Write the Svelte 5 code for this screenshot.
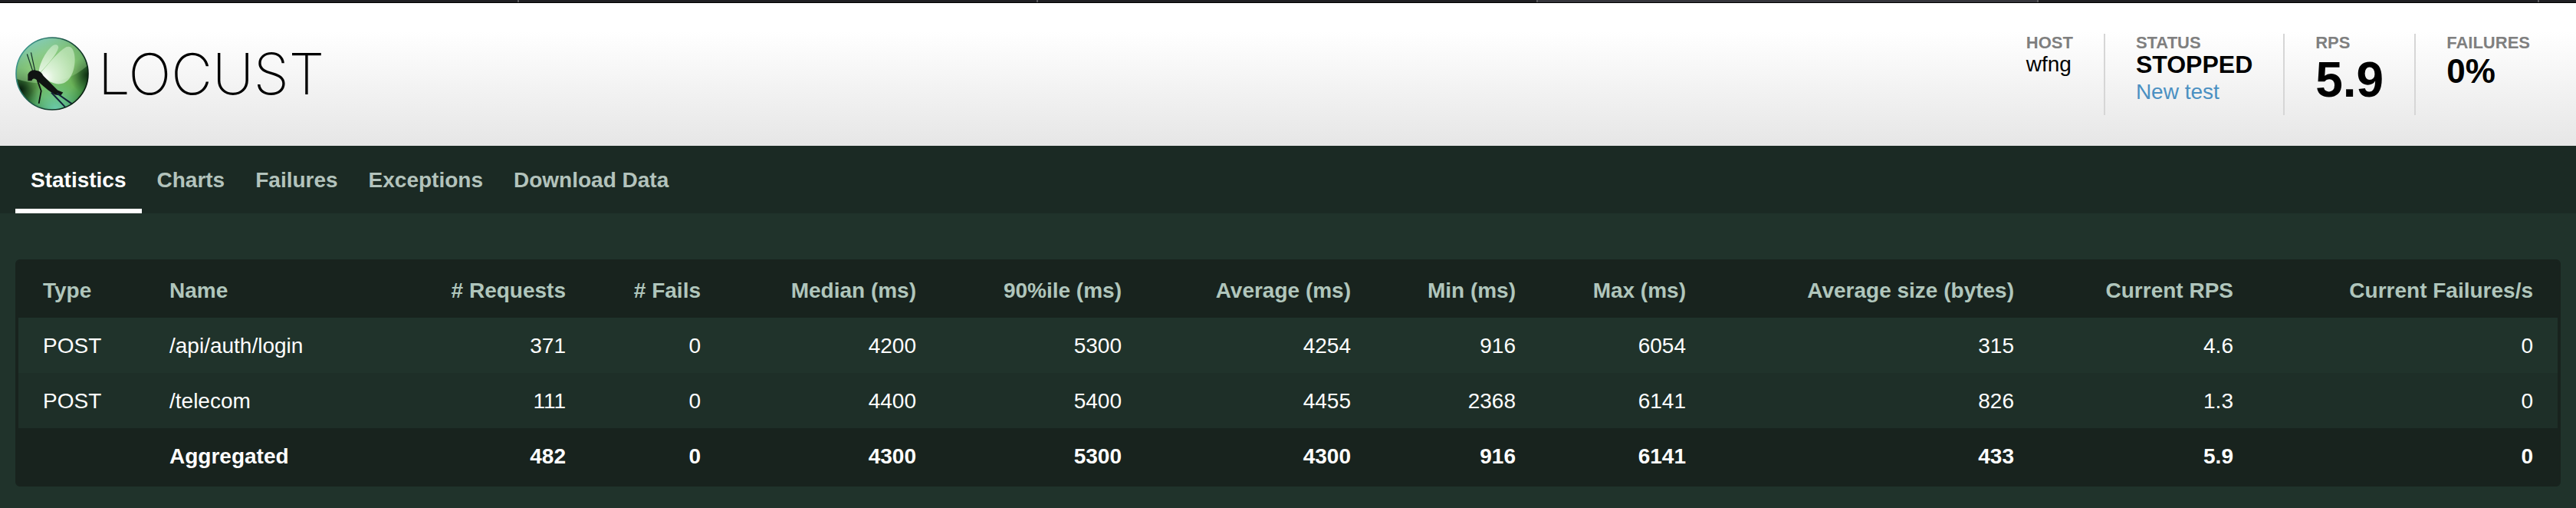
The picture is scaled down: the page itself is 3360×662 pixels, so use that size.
<script>
  const tabs = ['Statistics', 'Charts', 'Failures', 'Exceptions', 'Download Data'];
  let active = $state('Statistics');

  const columns = [
    { label: 'Type', width: 165, text: true },
    { label: 'Name', width: 321, text: true },
    { label: '# Requests', width: 260 },
    { label: '# Fails', width: 176 },
    { label: 'Median (ms)', width: 281 },
    { label: '90%ile (ms)', width: 268 },
    { label: 'Average (ms)', width: 299 },
    { label: 'Min (ms)', width: 215 },
    { label: 'Max (ms)', width: 222 },
    { label: 'Average size (bytes)', width: 428 },
    { label: 'Current RPS', width: 286 },
    { label: 'Current Failures/s', width: 391 }
  ];
  const total = columns.reduce((sum, c) => sum + c.width, 0);

  const rows = [
    ['POST', '/api/auth/login', 371, 0, 4200, 5300, 4254, 916, 6054, 315, '4.6', 0],
    ['POST', '/telecom', 111, 0, 4400, 5400, 4455, 2368, 6141, 826, '1.3', 0]
  ];
  const aggregated = ['', 'Aggregated', 482, 0, 4300, 5300, 4300, 916, 6141, 433, '5.9', 0];
</script>

<div class="page">
  <div class="strip"><i class="wide"></i><i class="wide"></i><i></i><i class="lit"></i><i></i><i class="end"></i></div>

  <header>
    <div class="brand">
      <svg viewBox="0 0 94 94" aria-hidden="true">
        <defs>
          <radialGradient id="ball" cx="0.5" cy="0.5" r="0.52">
            <stop offset="0" stop-color="#7cc46a" />
            <stop offset="0.65" stop-color="#68b056" />
            <stop offset="0.9" stop-color="#469346" />
            <stop offset="1" stop-color="#2a6a34" />
          </radialGradient>
          <linearGradient id="gloss" x1="0" y1="0" x2="0.7" y2="1">
            <stop offset="0" stop-color="#8fdcf0" stop-opacity="0.95" />
            <stop offset="0.5" stop-color="#9bd696" stop-opacity="0.6" />
            <stop offset="1" stop-color="#a5dc90" stop-opacity="0.3" />
          </linearGradient>
          <radialGradient id="shadeLeft" cx="0.06" cy="0.72" r="0.3">
            <stop offset="0" stop-color="#04150a" stop-opacity="0.95" />
            <stop offset="1" stop-color="#0c3010" stop-opacity="0" />
          </radialGradient>
          <radialGradient id="shadeRight" cx="1" cy="0.52" r="0.26">
            <stop offset="0" stop-color="#062009" stop-opacity="0.9" />
            <stop offset="1" stop-color="#0c3010" stop-opacity="0" />
          </radialGradient>
          <radialGradient id="glow" cx="0.55" cy="1" r="0.42">
            <stop offset="0" stop-color="#6fd0b4" stop-opacity="0.95" />
            <stop offset="1" stop-color="#6fd0a0" stop-opacity="0" />
          </radialGradient>
          <radialGradient id="wing" gradientUnits="userSpaceOnUse" cx="37" cy="52" r="42">
            <stop offset="0" stop-color="#fff" />
            <stop offset="0.3" stop-color="#f2fcf0" stop-opacity="0.8" />
            <stop offset="1" stop-color="#e0f7dc" stop-opacity="0.5" />
          </radialGradient>
          <linearGradient id="rim" x1="0" y1="0" x2="1" y2="0.5">
            <stop offset="0" stop-color="#4cb0a8" />
            <stop offset="0.5" stop-color="#1d5a4c" />
            <stop offset="1" stop-color="#082010" />
          </linearGradient>
          <clipPath id="round"><circle cx="47" cy="47" r="46" /></clipPath>
        </defs>
        <circle cx="47" cy="47" r="46" fill="url(#ball)" />
        <g clip-path="url(#round)">
          <circle cx="47" cy="47" r="46" fill="url(#shadeLeft)" />
          <circle cx="47" cy="47" r="46" fill="url(#shadeRight)" />
          <circle cx="47" cy="47" r="46" fill="url(#glow)" />
          <path d="M0 53C28 64 66 61 94 35V0H0Z" fill="url(#gloss)" />
          <path d="M30 44C31 33 40 17 48 11C52 9 55 10 55 14C53 22 42 35 32 45Z" fill="url(#wing)" />
          <path d="M32 46C43 34 54 19 65 13C72 10 76 18 76 29C76 45 69 59 58 60C49 61 41 56 34 49Z" fill="url(#wing)" />
          <path d="M22 43L15 22M25 43L20 20" stroke="#17332a" stroke-width="1.2" fill="none" />
          <path d="M16 48C18 43 23 41 27 43C31 43 34 46 36 50L54 68L61 71L58 75L51 74C42 69 34 61 29 57C26 53 22 52 21 56H16Z" fill="#101412" />
          <path d="M28 55L33 69L30 85" stroke="#101412" stroke-width="1.8" fill="none" />
          <path d="M46 71L64 90M53 72L73 86" stroke="#13223a" stroke-width="2" fill="none" />
        </g>
        <circle cx="47" cy="47" r="46" fill="none" stroke="url(#rim)" stroke-width="1.6" />
      </svg>
      <span class="word">LOCUST</span>
    </div>

    <div class="boxes">
      <div class="box"><span class="label">HOST</span><span class="host">wfng</span></div>
      <div class="box">
        <span class="label">STATUS</span><strong class="status">STOPPED</strong>
        <a href="#new">New test</a>
      </div>
      <div class="box"><span class="label">RPS</span><strong class="rps">5.9</strong></div>
      <div class="box"><span class="label">FAILURES</span><strong class="fail">0%</strong></div>
    </div>
  </header>

  <nav>
    {#each tabs as tab}
      <button class:active={active === tab} onclick={() => (active = tab)}>{tab}</button>
    {/each}
  </nav>

  <main>
    <table>
      <colgroup>
        {#each columns as c}<col style="width: {(c.width / total) * 100}%" />{/each}
      </colgroup>
      <thead>
        <tr>{#each columns as c}<th scope="col" class:text={c.text}>{c.label}</th>{/each}</tr>
      </thead>
      <tbody>
        {#each rows as row}
          <tr>{#each row as cell, i}<td class:text={columns[i].text}>{cell}</td>{/each}</tr>
        {/each}
      </tbody>
      <tfoot>
        <tr>{#each aggregated as cell, i}<td class:text={columns[i].text}>{cell}</td>{/each}</tr>
      </tfoot>
    </table>
  </main>
</div>

<style>
  :global(body) {
    margin: 0;
    background: #20332b;
  }
  .page {
    font-family: 'Liberation Sans', Arial, sans-serif;
    font-size: 28px;
    line-height: 32px;
    color: #fff;
  }
  .strip {
    display: flex;
    height: 3px;
    background: #1f1f23;
    border-bottom: 1px solid #000;
  }
  .strip i {
    flex: 27;
    border-right: 2px solid #5a5a5e;
  }
  .strip .wide {
    flex: 28;
  }
  .strip .lit {
    background: #36363b;
  }
  .strip .end {
    flex: none;
    width: 48px;
    border-right: 0;
  }
  header {
    display: flex;
    justify-content: space-between;
    align-items: flex-start;
    padding: 40px 60px 40px 20px;
    background: linear-gradient(#fff 20%, #e6e6e6);
    color: #000;
  }
  .brand {
    display: flex;
    align-items: center;
    gap: 12px;
    padding-top: 4px;
  }
  .brand svg {
    width: 96px;
    height: 96px;
  }
  .word {
    font-family: Inter, sans-serif;
    font-weight: 250;
    font-size: 74px;
    line-height: 96px;
  }
  .boxes {
    display: flex;
  }
  .box {
    display: flex;
    flex-direction: column;
    min-height: 106px;
    padding-left: 40px;
  }
  .box:not(:last-child) {
    padding-right: 40px;
    border-right: 2px solid #d6d6d6;
  }
  .label {
    font-size: 22px;
    font-weight: bold;
    line-height: 24px;
    color: #7f7f7f;
  }
  .host {
    line-height: 32px;
  }
  .status {
    font-size: 32px;
    line-height: 32px;
  }
  .rps {
    font-size: 64px;
    line-height: 72px;
  }
  .fail {
    font-size: 44px;
    line-height: 50px;
  }
  a {
    margin-top: 4px;
    color: #4a90c2;
    text-decoration: none;
  }
  nav {
    display: flex;
    padding: 0 20px;
    background: #1b2a24;
  }
  button {
    padding: 29px 20px 21px;
    border: 0;
    border-bottom: 6px solid transparent;
    background: none;
    font: inherit;
    font-weight: bold;
    color: #b3c3bc;
    cursor: pointer;
  }
  button.active {
    border-color: #fff;
    color: #fff;
  }
  main {
    padding: 60px 20px 28px;
  }
  table {
    width: 100%;
    table-layout: fixed;
    border: 4px solid #18231e;
    border-radius: 6px;
    border-spacing: 0;
    background: #18231e;
  }
  th,
  td {
    padding: 21px 32px 19px;
    text-align: right;
    white-space: nowrap;
  }
  th {
    color: #b0c6bc;
  }
  .text {
    text-align: left;
  }
  tbody tr {
    background: #20332b;
  }
  tbody tr:nth-child(even) {
    background: #1e2f28;
  }
  tfoot {
    font-weight: bold;
  }
</style>
